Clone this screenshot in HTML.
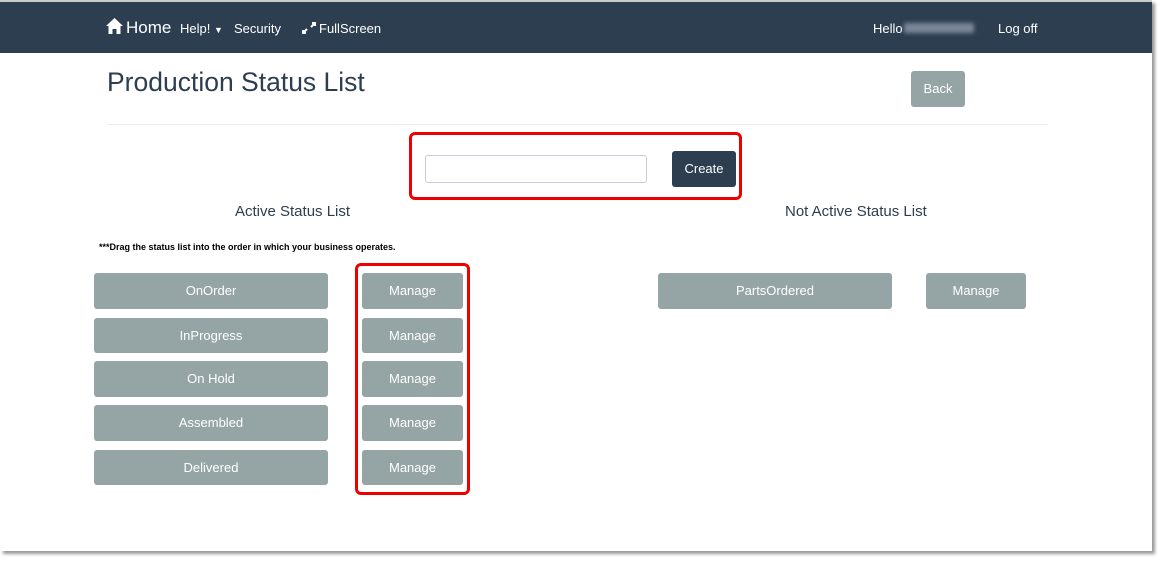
<!DOCTYPE html>
<html><head><style>
body{margin:0;width:1164px;height:562px;background:#fff;font-family:"Liberation Sans",sans-serif;position:relative;overflow:hidden}
.page{position:absolute;left:0;top:0;width:1152px;height:551px;background:#fff;box-shadow:3px 3px 3px #999}
.nav{position:absolute;left:0;top:2px;width:1152px;height:51px;background:#2c3e50;color:#fff;font-size:13px}
.nav span{position:absolute;top:19px}
.btn{position:absolute;background:#95a5a6;color:#fff;font-size:13px;text-align:center;border-radius:3px}
.red{position:absolute;border:3px solid #e00;border-radius:6px}
</style></head><body>
<div class="page">
<div style="position:absolute;left:0;top:0;width:1152px;height:2px;background:#ccc"></div>
<div class="nav">
<svg style="position:absolute;left:106px;top:16px" width="17" height="16" viewBox="0 0 17 16"><path d="M8.5 0L0 8h2.5v8h4v-5h4v5h4V8H17z" fill="#fff"/></svg>
<span style="left:126px;top:16px;font-size:17px">Home</span>
<span style="left:180px">Help! <span style="position:static;font-size:9px">▼</span></span>
<span style="left:234px">Security</span>
<svg style="position:absolute;left:302px;top:20px" width="14" height="12" viewBox="0 0 14 12"><path d="M1 11L5 7M9 5L13 1M10 1h3v3M1 8v3h3" stroke="#fff" stroke-width="2" fill="none"/></svg>
<span style="left:319px">FullScreen</span>
<span style="left:873px">Hello</span>
<span style="left:904px;top:21px;width:70px;height:10px;background:#7a8898;filter:blur(2px)"></span>
<span style="left:998px">Log off</span>
</div>
<div style="position:absolute;left:107px;top:67px;font-size:26.5px;color:#2c3e50">Production Status List</div>
<div class="btn" style="left:911px;top:71px;width:54px;height:36px;line-height:36px">Back</div>
<div style="position:absolute;left:107px;top:124px;width:941px;height:1px;background:#eee"></div>
<div class="red" style="left:409px;top:132px;width:327px;height:62px"></div>
<div style="position:absolute;left:425px;top:155px;width:220px;height:26px;border:1px solid #ccd;border-radius:3px"></div>
<div class="btn" style="left:672px;top:151px;width:64px;height:36px;line-height:36px;background:#2c3e50">Create</div>
<div style="position:absolute;left:235px;top:203px;font-size:15px;color:#2c3e50">Active Status List</div>
<div style="position:absolute;left:785px;top:203px;font-size:15px;color:#2c3e50">Not Active Status List</div>
<div style="position:absolute;left:99px;top:242px;font-size:9px;font-weight:bold;color:#000">***Drag the status list into the order in which your business operates.</div>
<div class="red" style="left:355px;top:263px;width:109px;height:226px"></div>
<div class="btn" style="left:94px;top:273px;width:234px;height:36px;line-height:36px">OnOrder</div>
<div class="btn" style="left:94px;top:318px;width:234px;height:35px;line-height:35px">InProgress</div>
<div class="btn" style="left:94px;top:361px;width:234px;height:36px;line-height:36px">On Hold</div>
<div class="btn" style="left:94px;top:405px;width:234px;height:36px;line-height:36px">Assembled</div>
<div class="btn" style="left:94px;top:450px;width:234px;height:35px;line-height:35px">Delivered</div>
<div class="btn" style="left:362px;top:273px;width:101px;height:36px;line-height:36px">Manage</div>
<div class="btn" style="left:362px;top:318px;width:101px;height:35px;line-height:35px">Manage</div>
<div class="btn" style="left:362px;top:361px;width:101px;height:36px;line-height:36px">Manage</div>
<div class="btn" style="left:362px;top:405px;width:101px;height:36px;line-height:36px">Manage</div>
<div class="btn" style="left:362px;top:450px;width:101px;height:35px;line-height:35px">Manage</div>
<div class="btn" style="left:658px;top:273px;width:234px;height:36px;line-height:36px">PartsOrdered</div>
<div class="btn" style="left:926px;top:273px;width:100px;height:36px;line-height:36px">Manage</div>
</div>
</body></html>
